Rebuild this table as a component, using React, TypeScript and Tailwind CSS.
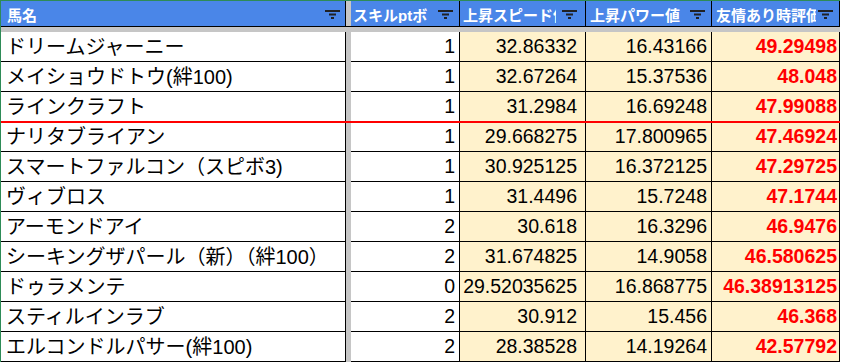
import React from "react";

type Row = {
  name: string;
  pt: string;
  speed: string;
  power: string;
  score: string;
};

const rows: Row[] = [
  { name: "ドリームジャーニー", pt: "1", speed: "32.86332", power: "16.43166", score: "49.29498" },
  { name: "メイショウドトウ(絆100)", pt: "1", speed: "32.67264", power: "15.37536", score: "48.048" },
  { name: "ラインクラフト", pt: "1", speed: "31.2984", power: "16.69248", score: "47.99088" },
  { name: "ナリタブライアン", pt: "1", speed: "29.668275", power: "17.800965", score: "47.46924" },
  { name: "スマートファルコン（スピボ3)", pt: "1", speed: "30.925125", power: "16.372125", score: "47.29725" },
  { name: "ヴィブロス", pt: "1", speed: "31.4496", power: "15.7248", score: "47.1744" },
  { name: "アーモンドアイ", pt: "2", speed: "30.618", power: "16.3296", score: "46.9476" },
  { name: "シーキングザパール（新）（絆100）", pt: "2", speed: "31.674825", power: "14.9058", score: "46.580625" },
  { name: "ドゥラメンテ", pt: "0", speed: "29.52035625", power: "16.868775", score: "46.38913125" },
  { name: "スティルインラブ", pt: "2", speed: "30.912", power: "15.456", score: "46.368" },
  { name: "エルコンドルパサー(絆100)", pt: "2", speed: "28.38528", power: "14.19264", score: "42.57792" },
];

const font = { fontFamily: '"Liberation Sans", "Noto Sans CJK JP", sans-serif' };

function FilterIcon() {
  return (
    <svg width="15" height="9" viewBox="0 0 15 9" className="shrink-0">
      <rect x="0" y="0" width="15" height="2" fill="#202124" />
      <rect x="4" y="3.5" width="7" height="2" fill="#202124" />
      <rect x="6" y="7" width="3" height="2" fill="#202124" />
    </svg>
  );
}

function HeaderCell({ label, className }: { label: string; className: string }) {
  return (
    <div className={`flex items-center bg-[#4a86e8] border-r border-black ${className}`}>
      <span className="flex-1 min-w-0 overflow-hidden whitespace-nowrap text-[15px] font-bold text-white leading-none pt-[3px]">
        {label}
      </span>
      <span className="pt-[2px]">
        <FilterIcon />
      </span>
    </div>
  );
}

export default function App() {
  return (
    <div className="w-[843px] h-[364px] bg-white overflow-hidden" style={font}>
      <div className="w-[840px] border-t border-l border-[#2e8b57]">
        <div className="flex h-[26px] border-b border-black">
          <HeaderCell label="馬名" className="w-[345px] pl-[6px] pr-[5px]" />
          <div className="w-[5px] bg-[#c6c6c6]" />
          <HeaderCell label="スキルptボ" className="w-[109px] pl-[2px] pr-[6px] gap-[4px]" />
          <HeaderCell label="上昇スピード値" className="w-[126px] pl-[3px] pr-[8px] gap-[6px]" />
          <HeaderCell label="上昇パワー値" className="w-[126px] pl-[4px] pr-[6px] gap-[4px]" />
          <HeaderCell label="友情あり時評価" className="w-[128px] pl-[4px] pr-[6px] gap-[2px]" />
        </div>
        <div className="h-[5px] bg-[#c6c6c6]" />
        {rows.map((r, i) => {
          const red = i === 2;
          const cellB = red ? "" : "border-b border-black";
          return (
            <div
              key={r.name}
              className={`flex ${red ? "h-[31px] border-b-2 border-[#ff0000]" : i === 3 ? "h-[29px]" : "h-[30px]"}`}
            >
              <div className={`w-[345px] flex items-center pl-[5px] border-r border-black text-[20px] text-black whitespace-nowrap overflow-hidden ${cellB}`}>
                {r.name}
              </div>
              <div className="w-[5px] bg-[#c6c6c6]" />
              <div className={`w-[109px] flex items-center justify-end pr-[4px] border-r border-black text-[19.5px] text-black ${cellB}`}>
                {r.pt}
              </div>
              <div className={`w-[126px] flex items-center justify-end pr-[8px] bg-[#fff2cc] border-r border-black text-[19.5px] text-black ${cellB}`}>
                {r.speed}
              </div>
              <div className={`w-[126px] flex items-center justify-end pr-[4px] bg-[#fff2cc] border-r border-black text-[19.5px] text-black ${cellB}`}>
                {r.power}
              </div>
              <div className={`w-[128px] flex items-center justify-end pr-[2px] bg-[#fff2cc] border-r border-black text-[19.5px] font-bold text-[#ff0000] whitespace-nowrap ${cellB}`}>
                {r.score}
              </div>
            </div>
          );
        })}
      </div>
    </div>
  );
}
